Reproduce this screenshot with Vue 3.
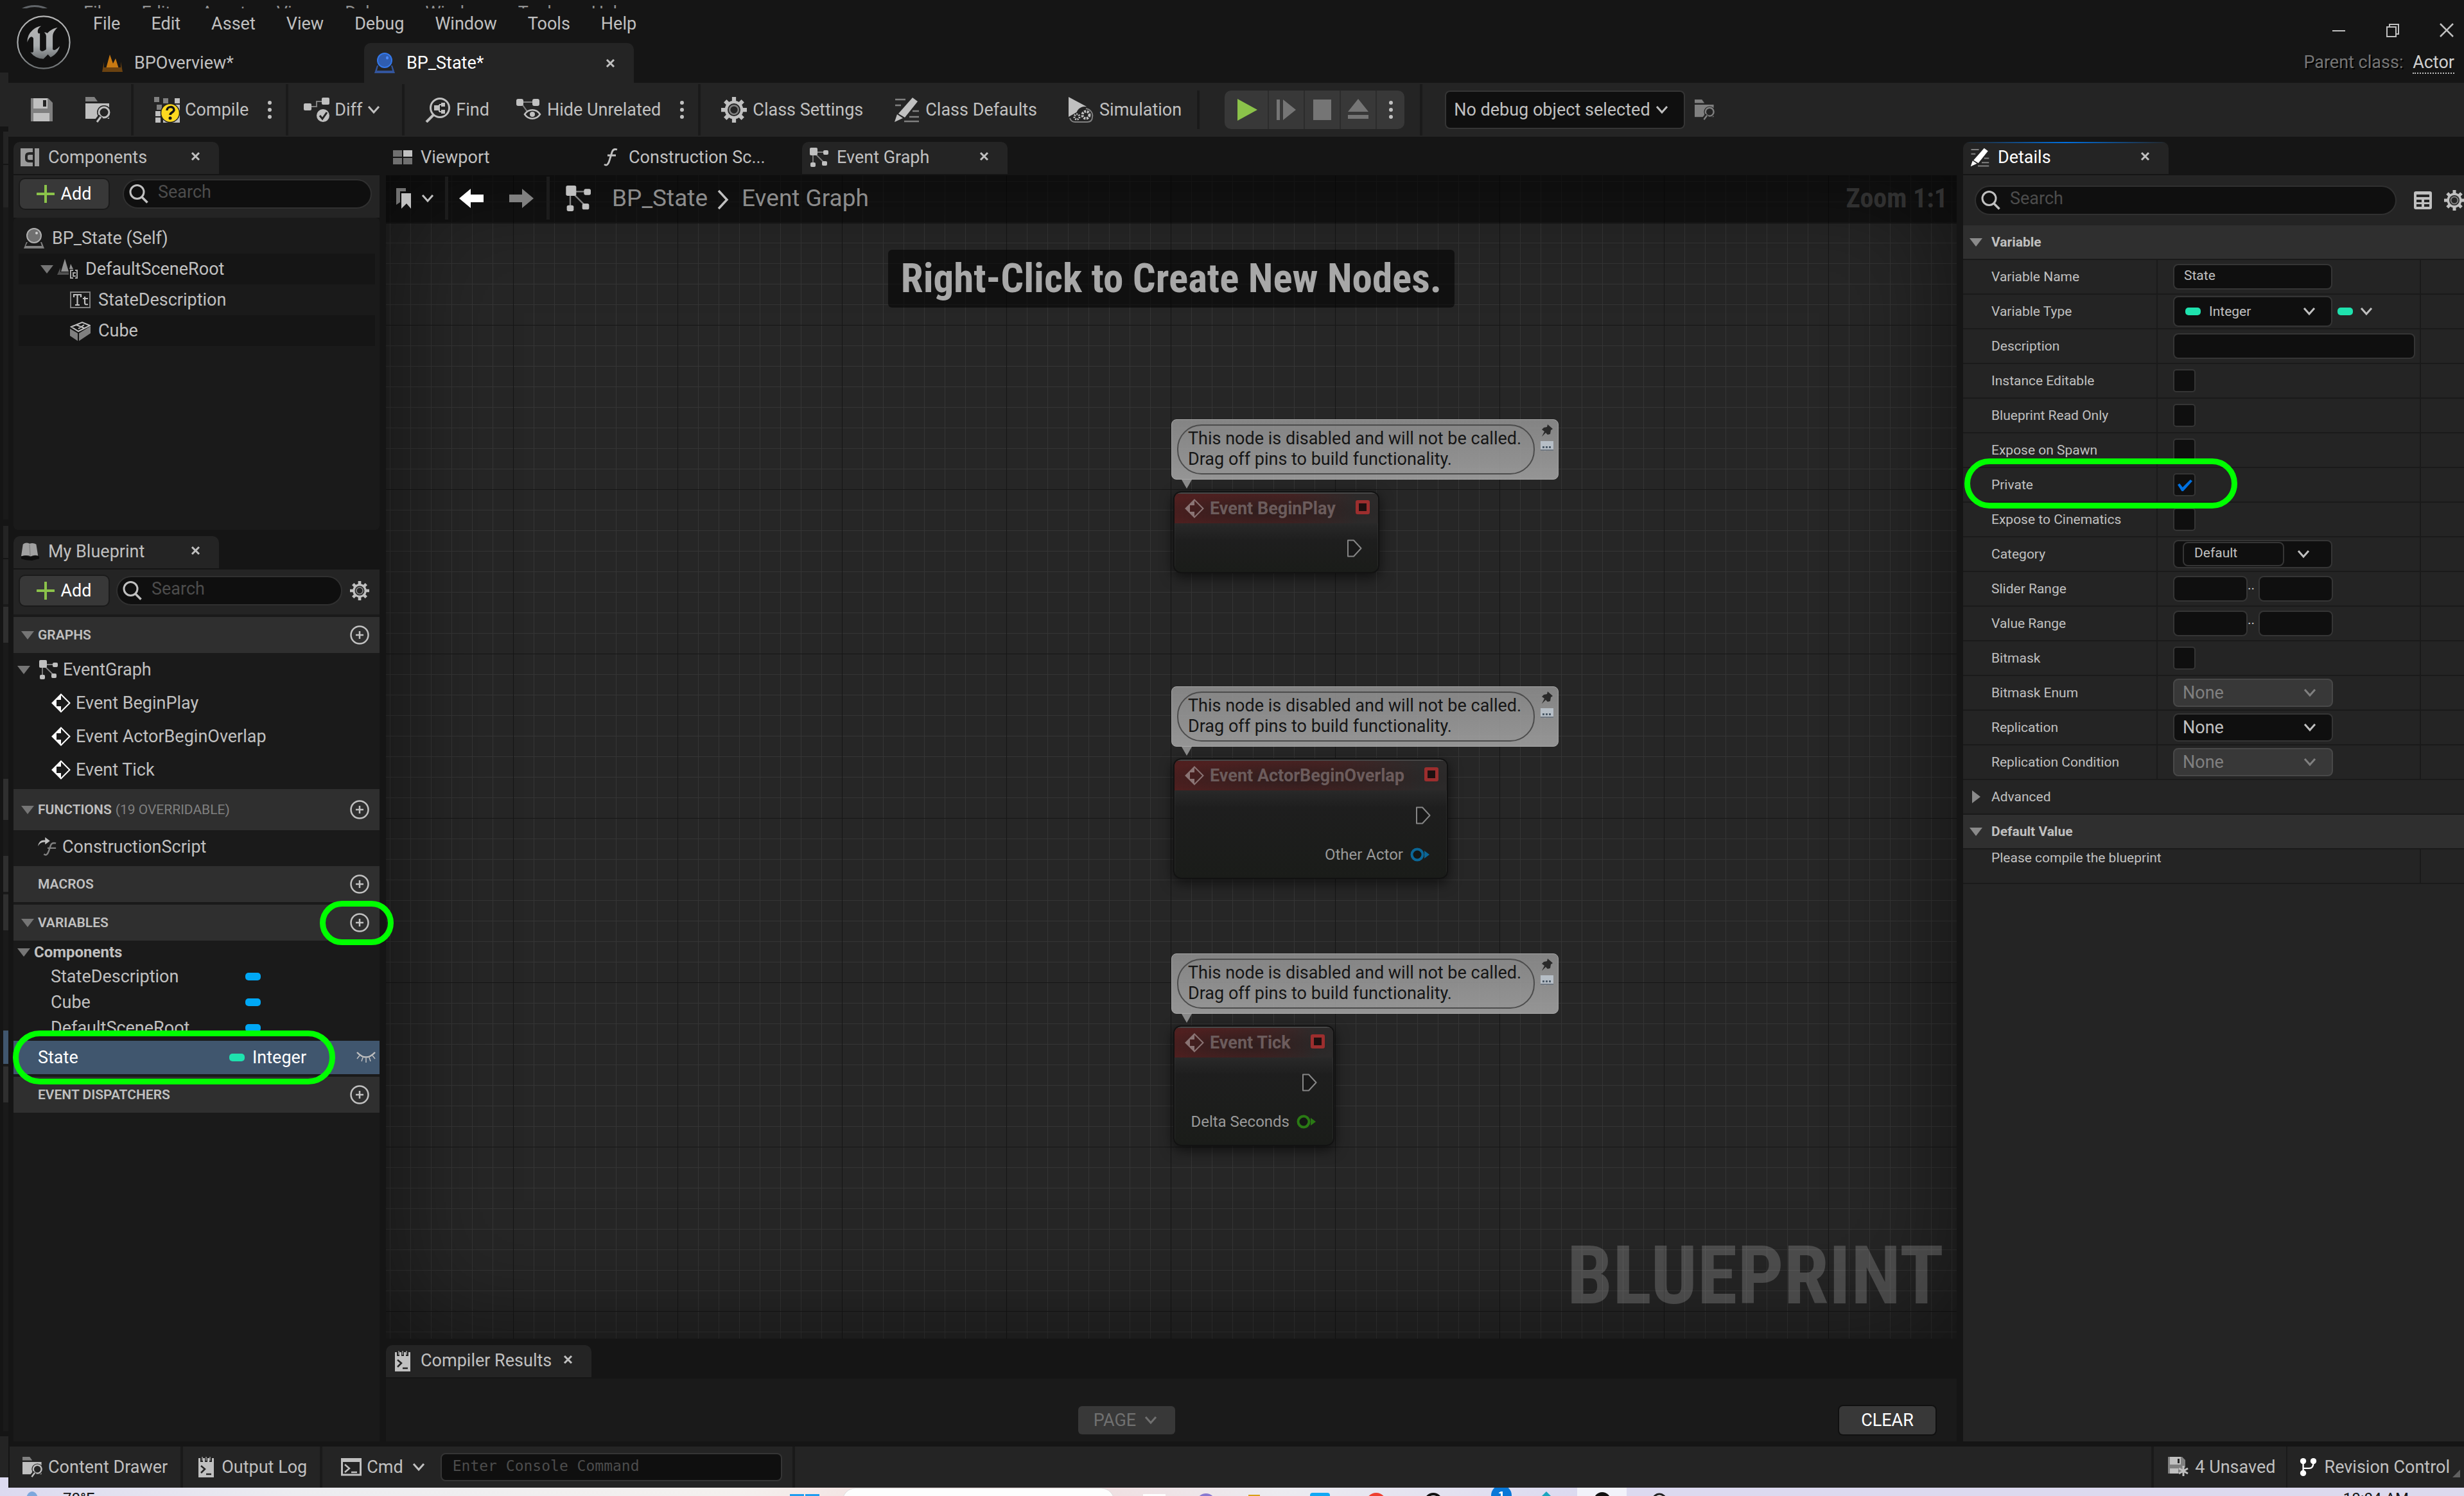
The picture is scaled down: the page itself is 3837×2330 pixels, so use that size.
<script setup>
import { ref } from 'vue'

const menu = ['File', 'Edit', 'Asset', 'View', 'Debug', 'Window', 'Tools', 'Help']

// Slices of the editor window lying behind this one, top to bottom.
const edge = [
  { h: 100, c: 'base' }, { h: 84, c: 'panel' }, { h: 8, c: 'base' },
  { h: 50, c: 'inset panel' }, { h: 2, c: 'base' }, { h: 66, c: 'inset panel' },
  { h: 486, c: 'inset well' }, { h: 10, c: 'base' }, { h: 50, c: 'inset panel' },
  { h: 2, c: 'base' }, { h: 70, c: 'inset panel' }, { h: 4, c: 'inset well' },
  { h: 56, c: 'inset head' }, { h: 212, c: 'inset well' }, { h: 64, c: 'inset head' },
  { h: 56, c: 'inset well' }, { h: 56, c: 'inset head' }, { h: 4, c: 'inset well' },
  { h: 56, c: 'inset head' }, { h: 156, c: 'inset well' }, { h: 52, c: 'inset picked' },
  { h: 4, c: 'inset well' }, { h: 56, c: 'inset head' }, { h: 512, c: 'inset well' },
  { h: 8, c: 'base' }, { h: 64, c: 'panel' }, { h: 16, c: 'desk' }
]

const events = ['Event BeginPlay', 'Event ActorBeginOverlap', 'Event Tick']
const componentVars = ['StateDescription', 'Cube', 'DefaultSceneRoot']

const nodes = [
  { title: 'Event BeginPlay', x: 1226, y: 492, w: 321, h: 128 },
  { title: 'Event ActorBeginOverlap', x: 1226, y: 908, w: 428, h: 188, pin: 'Other Actor', color: '#0b6797' },
  { title: 'Event Tick', x: 1226, y: 1324, w: 251, h: 188, pin: 'Delta Seconds', color: '#2a7a14' }
]

const rows = [
  { id: 'name', label: 'Variable Name', kind: 'text', value: 'State' },
  { id: 'type', label: 'Variable Type', kind: 'type' },
  { id: 'desc', label: 'Description', kind: 'wide', value: '' },
  { id: 'inst', label: 'Instance Editable', kind: 'check' },
  { id: 'ro', label: 'Blueprint Read Only', kind: 'check' },
  { id: 'spawn', label: 'Expose on Spawn', kind: 'check' },
  { id: 'priv', label: 'Private', kind: 'check', on: true, marked: true },
  { id: 'cine', label: 'Expose to Cinematics', kind: 'check' },
  { id: 'cat', label: 'Category', kind: 'category' },
  { id: 'slider', label: 'Slider Range', kind: 'range' },
  { id: 'value', label: 'Value Range', kind: 'range' },
  { id: 'mask', label: 'Bitmask', kind: 'check' },
  { id: 'enum', label: 'Bitmask Enum', kind: 'combo', off: true },
  { id: 'repl', label: 'Replication', kind: 'combo' },
  { id: 'cond', label: 'Replication Condition', kind: 'combo', off: true }
]

const command = ref('')
</script>

<template>
  <div class="desktop">
    <svg class="sprite" aria-hidden="true">
      <symbol id="i-x" viewBox="0 0 15 15"><path d="M2 2l11 11M13 2L2 13" stroke="currentColor" stroke-width="3" /></symbol>
      <symbol id="i-chev" viewBox="0 0 20 14"><path d="M2 2l8 9 8-9" fill="none" stroke="currentColor" stroke-width="3" /></symbol>
      <symbol id="i-tri" viewBox="0 0 20 14"><path d="M0 1h20L10 14z" fill="currentColor" /></symbol>
      <symbol id="i-dots" viewBox="0 0 6 30"><g fill="currentColor"><circle cx="3" cy="4" r="3" /><circle cx="3" cy="15" r="3" /><circle cx="3" cy="26" r="3" /></g></symbol>
      <symbol id="i-plus" viewBox="0 0 28 28"><path d="M14 1v26M1 14h26" stroke="#8bc24a" stroke-width="4" stroke-linecap="round" /></symbol>
      <symbol id="i-addc" viewBox="0 0 30 30"><circle cx="15" cy="15" r="13.5" fill="none" stroke="currentColor" stroke-width="2.5" /><path d="M15 9v12M9 15h12" stroke="currentColor" stroke-width="2.5" /></symbol>
      <symbol id="i-find" viewBox="0 0 30 30"><circle cx="12.500" cy="12" r="10.500" fill="none" stroke="currentColor" stroke-width="3" /><path d="M20 20l8.500 8.500" stroke="currentColor" stroke-width="3.500" /></symbol>
      <symbol id="i-gear" viewBox="0 0 32 32">
        <g stroke="currentColor" stroke-width="5"><path d="M16 0v32M0 16h32M5 5l22 22M27 5L5 27" /></g>
        <circle cx="16" cy="16" r="11.500" fill="currentColor" /><circle cx="16" cy="16" r="8" fill="#242424" />
        <circle cx="16" cy="16" r="5.500" fill="none" stroke="#808080" stroke-width="2" />
      </symbol>
      <symbol id="i-save" viewBox="0 0 36 36"><path d="M1 0h27l7 7v29H1z" fill="#808080" /><path d="M5 0h22v16H5zM5 23h25v13H5z" fill="#c0c0c0" /><path d="M20 3h5v10h-5z" fill="#242424" /></symbol>
      <symbol id="i-browse" viewBox="0 0 40 40">
        <path d="M0 0h14l5 7H0z" fill="#808080" /><path d="M0 10h37v24H0z" fill="currentColor" />
        <circle cx="29" cy="24" r="11" fill="#242424" /><circle cx="29" cy="24" r="8" fill="none" stroke="currentColor" stroke-width="3" /><path d="M24 30l-7 9" stroke="#242424" stroke-width="8" /><path d="M24 31l-6 8" stroke="currentColor" stroke-width="3" />
      </symbol>
      <symbol id="i-compile" viewBox="0 0 40 40">
        <g fill="#808080"><path d="M0 0h8v8H0zM14 2h8v8h-8zM4 12h8v8H4z" /></g>
        <g fill="#c0c0c0"><path d="M32 2h8v8h-8zM2 22h8v8H2zM2 32h8v8H2zM14 32h26v8H14zM32 12h8v20h-8z" /></g>
        <circle cx="25" cy="25" r="14.500" fill="#ffd91f" stroke="#242424" stroke-width="1.500" />
        <path d="M20 21c0-7 11-7 11-1 0 4-6 4-6 8" fill="none" stroke="#151515" stroke-width="3.500" /><circle cx="25" cy="33" r="2.500" fill="#151515" />
      </symbol>
      <symbol id="i-diff" viewBox="0 0 40 40">
        <path d="M8 15h12V7h12" fill="none" stroke="#808080" stroke-width="2" />
        <rect y="10" width="12" height="11" rx="2" fill="#c0c0c0" /><rect x="28" y="1" width="12" height="11" rx="2" fill="#c0c0c0" />
        <circle cx="30" cy="29" r="10" fill="#c0c0c0" /><path d="M25 29l4 5 7-10" fill="none" stroke="#242424" stroke-width="3" />
      </symbol>
      <symbol id="i-findg" viewBox="0 0 40 40">
        <circle cx="23" cy="17" r="14.500" fill="none" stroke="currentColor" stroke-width="3" /><path d="M13 28L2 39" stroke="currentColor" stroke-width="4" />
        <path d="M17 17h5M22 12v11M22 12h5M22 23h5" fill="none" stroke="currentColor" stroke-width="2" /><path d="M14 13h7v8h-7zM25 9h6v6h-6zM25 20h6v6h-6z" fill="currentColor" />
      </symbol>
      <symbol id="i-hide" viewBox="0 0 40 40">
        <path d="M6 8h26M8 10l10 14" stroke="#808080" stroke-width="2" fill="none" />
        <rect width="11" height="11" y="3" rx="3" fill="currentColor" /><rect x="25" y="3" width="11" height="11" rx="3" fill="currentColor" />
        <path d="M13 27c6-9 18-9 24 0-6 9-18 9-24 0z" fill="#242424" stroke="currentColor" stroke-width="2.500" /><circle cx="25" cy="27" r="4" fill="currentColor" />
      </symbol>
      <symbol id="i-edit" viewBox="0 0 40 40">
        <path d="M2 4h16M2 13h9M29 22h10M24 31h15M16 38h23" stroke="#808080" stroke-width="2.500" />
        <path d="M29 1l8 6-20 25-10-6z" fill="currentColor" /><path d="M5 27l9 6-13 6z" fill="currentColor" />
      </symbol>
      <symbol id="i-sim" viewBox="0 0 40 40">
        <path d="M1 0l28 15L1 31z" fill="currentColor" /><circle cx="26" cy="28" r="13" fill="#242424" />
        <path d="M28 18a13 11 0 0110 13q0 8-8 8H11q-6 0-8-6" fill="none" stroke="#808080" stroke-width="2" />
        <circle cx="14" cy="31" r="4" fill="none" stroke="currentColor" stroke-width="3" stroke-dasharray="2 1.500" /><circle cx="28" cy="28" r="5.500" fill="none" stroke="currentColor" stroke-width="4" stroke-dasharray="3 1.500" />
      </symbol>
      <symbol id="i-graph" viewBox="0 0 30 30">
        <path d="M7 7h17M6 7v19M8 8l17 17" stroke="#808080" stroke-width="1.800" fill="none" />
        <g fill="currentColor"><rect x="1" width="12" height="12" rx="2" /><rect x="22" y="4" width="8" height="7" rx="2" /><rect x="2" y="23" width="8" height="7" rx="2" /><rect x="20" y="21" width="8" height="7" rx="2" /></g>
      </symbol>
      <symbol id="i-comp" viewBox="0 0 30 30"><path d="M0 1h19v28H0zM22 1h7v28h-7z" fill="#9a9a9a" /><path d="M20 9h-6q-5 0-5 4v4q0 4 5 4h6" fill="none" stroke="#242424" stroke-width="4" /></symbol>
      <symbol id="i-view" viewBox="0 0 30 30"><path d="M0 4h14v10H0zM0 16h14v10H0zM16 16h14v10H16z" fill="#707070" /><path d="M16 4h14v10H16z" fill="#c0c0c0" /></symbol>
      <symbol id="i-func" viewBox="0 0 30 30"><path d="M5 26q5 4 8-6l4-13q2-6 8-4M10 12h13" fill="none" stroke="currentColor" stroke-width="2.800" /></symbol>
      <symbol id="i-over" viewBox="0 0 32 32">
        <path d="M10 28q5 4 8-5l3-9q2-6 9-4M16 18h14" fill="none" stroke="#808080" stroke-width="2.600" />
        <path d="M0 15Q2 4 12 5V0l8 6-8 6V8Q4 7 0 15z" fill="#c0c0c0" />
      </symbol>
      <symbol id="i-event" viewBox="0 0 30 30"><path d="M15 1.500L28.500 15 15 28.500 1.500 15z" fill="none" stroke="currentColor" stroke-width="2" /><path d="M15 1v9H8v10h7v9L1 15z" fill="currentColor" /></symbol>
      <symbol id="i-actor" viewBox="0 0 32 32">
        <path d="M4 22h24l4 10H0z" fill="#808080" /><path d="M6 22h20l2 6H3z" fill="#1a1a1a" /><circle cx="16" cy="12" r="11" fill="#707070" stroke="#b0b0b0" stroke-width="2" /><circle cx="20" cy="8" r="2" fill="#d0d0d0" />
      </symbol>
      <symbol id="i-actorb" viewBox="0 0 32 32">
        <path d="M4 20h24l4 12H0z" fill="#33559c" /><path d="M6 20h20l2 8H4z" fill="#242424" /><circle cx="16" cy="12" r="11" fill="#2f5db0" stroke="#3478ea" stroke-width="2" /><ellipse cx="20" cy="8" rx="2" ry="2.500" fill="#4c8cff" />
      </symbol>
      <symbol id="i-level" viewBox="0 0 32 32"><path d="M12 3l5 14 4-8 5 16H6z" fill="#c97a12" /><path d="M0 30L3 14v9h26V14l3 16z" fill="#6b4210" /></symbol>
      <symbol id="i-scene" viewBox="0 0 32 32"><path d="M12 0l6 20H6zM21 8l4 8h-6z" fill="#909090" /><path d="M0 25l5-11v7h13v4z" fill="#505050" /><path d="M20 17h5v2h-3v10h3v2h-5zM28 17h4v14h-4v-2h2V19h-2zM24 21h5v2h-3v3h3v2h-5z" fill="#a8a8a8" /></symbol>
      <symbol id="i-text" viewBox="0 0 32 32"><rect x="1" y="4" width="30" height="24" fill="none" stroke="#808080" stroke-width="2" /><path d="M5 8h13M6 8v4M17 8v4M11.500 8v15M8 24h7M23 11v10q0 3 5 2M20 14h8" fill="none" stroke="#c0c0c0" stroke-width="2.200" /></symbol>
      <symbol id="i-cube" viewBox="0 0 32 32"><path d="M0 13l12 7v12L0 24zM14 20l18-11v11L14 32z" fill="#808080" /><path d="M2 10l17-7 12 5-18 9zM10 7l12 5M13 13l9-6" fill="none" stroke="#c0c0c0" stroke-width="2" /></symbol>
      <symbol id="i-book" viewBox="0 0 32 30"><path d="M4 3q5-4 11-1 6-2 11 1l3 19q-6-2-12 1-7-3-16 0z" fill="#a0a0a0" /><path d="M1 23q9-2 15 1 7-3 15-1v4l-12 3-10-1-8-2z" fill="#0c0c0c" /><path d="M15 3l1 19" stroke="#808080" stroke-width="1.500" /></symbol>
      <symbol id="i-mark" viewBox="0 0 24 32"><path d="M0 0h15v5H6v17l-6 4z" fill="#707070" /><path d="M8 8h15v24l-7-8-8 8z" fill="#c0c0c0" /></symbol>
      <symbol id="i-back" viewBox="0 0 38 30"><path d="M0 15L18 0v9h20v12H18v9z" fill="currentColor" /></symbol>
      <symbol id="i-fwd" viewBox="0 0 38 30"><path d="M38 15L20 0v9H0v12h20v9z" fill="currentColor" /></symbol>
      <symbol id="i-log" viewBox="0 0 24 32"><path d="M0 2h3v6h4V2h3v6h4V2h3v6h4V2h3v30H0z" fill="currentColor" /><path d="M5 0h2v6H5zM11 0h2v6h-2zM17 0h2v6h-2z" fill="#808080" /><path d="M4 14l6 5-6 6M12 27h8" fill="none" stroke="#242424" stroke-width="2.500" /></symbol>
      <symbol id="i-cmd" viewBox="0 0 32 28"><path d="M1.500 2h29v24h-29z" fill="none" stroke="currentColor" stroke-width="3" /><path d="M0 0h32v6H0z" fill="currentColor" /><path d="M6 10l7 6-7 6M16 22h9" fill="none" stroke="currentColor" stroke-width="2.500" /></symbol>
      <symbol id="i-grid" viewBox="0 0 28 28"><rect width="28" height="28" rx="3" fill="#c0c0c0" /><path d="M4 5h20v4H4zM4 13h8v4H4zM16 13h8v4h-8zM4 20h8v4H4zM16 20h8v4h-8z" fill="#242424" /></symbol>
      <symbol id="i-eye" viewBox="0 0 30 18"><path d="M1 1q14 15 28 0" fill="none" stroke="#c0c0c0" stroke-width="2.500" /><path d="M5 6l-4 5M10 9l-2 6M15 10v7M20 9l2 6M25 6l4 5" stroke="#c0c0c0" stroke-width="1.500" /></symbol>
      <symbol id="i-unsaved" viewBox="0 0 34 32"><path d="M0 0h22l5 5v11l-10 10H0z" fill="#808080" /><path d="M3 0h17v12H3zM3 18h13v8H3z" fill="#c0c0c0" /><path d="M15 3h3v7h-3z" fill="#242424" /><path d="M24 14v16M17 18l14 8M31 18l-14 8" stroke="#c0c0c0" stroke-width="3" /></symbol>
      <symbol id="i-rev" viewBox="0 0 30 32"><path d="M6 6v20M6 18h10q7 0 7-10" fill="none" stroke="#fff" stroke-width="2.500" /><circle cx="6" cy="6" r="5" fill="#fff" /><circle cx="23" cy="6" r="5" fill="#fff" /><circle cx="6" cy="26" r="5" fill="#fff" /></symbol>
      <symbol id="i-pin" viewBox="0 0 20 20"><path d="M11 0l8 7-3 2-1 6-4 1-3-3-6 6 4-8-4-3 3-3 5-1z" fill="#2a2a2a" /></symbol>
      <symbol id="i-note" viewBox="0 0 20 18"><path d="M0 1h20v13H9l-2 3-2-3H0z" fill="#b6bec6" /><path d="M0 14h20v2H0z" fill="#6f7780" /><path d="M3 9h3v3H3zM8 9h3v3H8zM13 9h3v3h-3z" fill="#4c5a68" /></symbol>
      <symbol id="i-exec" viewBox="0 0 24 28"><path d="M2 1.500h9L22.500 14 11 26.500H2z" fill="#181818" stroke="#868686" stroke-width="2" stroke-linejoin="round" /></symbol>
      <symbol id="i-pinc" viewBox="0 0 30 22"><circle cx="11" cy="11" r="8.500" fill="#141614" stroke="currentColor" stroke-width="4" /><path d="M22 5l8 6-8 6z" fill="currentColor" /></symbol>
    </svg>

    <div class="ghost-menu" aria-hidden="true">
      <span class="ghost-arc"></span>
      <span v-for="m in menu" :key="m">{{ m }}</span>
    </div>

    <div class="stack">
      <div class="edge" aria-hidden="true">
        <i v-for="(s, n) in edge" :key="n" :class="s.c" :style="{ height: s.h + 'px' }"></i>
      </div>

      <div class="window">
        <header class="title">
          <svg class="logo" viewBox="0 0 24 24"><defs><linearGradient id="steel" x1="0" y1="0" x2="0" y2="1"><stop offset="0" stop-color="#b4b4b4" /><stop offset=".6" stop-color="#a8acae" /><stop offset="1" stop-color="#6c7072" /></linearGradient></defs>
            <circle cx="12" cy="12" r="11.600" fill="#111" stroke="url(#steel)" stroke-width=".6" />
            <path fill="url(#steel)" d="M19.130 13.729c-.206.997-1.126 3.557-4.060 4.942l-1.179-1.325-1.988 2a7.338 7.338 0 01-5.804-2.978 2.859 2.859 0 00.650.123c.326.006.678-.114.678-.660v-5.394a.890.890 0 00-1.116-.890c-.920.212-1.656 2.509-1.656 2.509a7.304 7.304 0 012.528-5.597 7.408 7.408 0 013.730-1.721c-1.006.573-1.570 1.507-1.570 2.290 0 1.262.760 1.109.984.923v7.280a1.157 1.157 0 00.148.256 1.075 1.075 0 00.880.445c.760 0 1.747-.868 1.747-.868V9.172c0-.600-.452-1.324-.905-1.572 0 0 .838-.149 1.484.346a5.537 5.537 0 01.387-.425c1.508-1.480 2.929-1.902 4.112-2.112 0 0-2.151 1.690-2.151 3.960 0 1.687.043 5.801.043 5.801.799.771 1.986-.342 3.059-1.441z" />
          </svg>
          <div class="title-main">
            <nav class="menu"><button v-for="m in menu" :key="m">{{ m }}</button></nav>
            <div class="docs">
              <button class="doc"><svg class="s32"><use href="#i-level" /></svg><span>BPOverview*</span></button>
              <div class="doc active"><svg class="s32"><use href="#i-actorb" /></svg><span>BP_State*</span><button class="close" aria-label="Close BP_State"><svg><use href="#i-x" /></svg></button></div>
            </div>
          </div>
          <div class="title-side">
            <div class="winbtns">
              <button aria-label="Minimize"><svg viewBox="0 0 24 24"><path d="M2 13h20" stroke="#c0c0c0" stroke-width="2" /></svg></button>
              <button aria-label="Restore"><svg viewBox="0 0 24 24"><path d="M3 7h14v15H3zM7 6V3h14v15h-4" fill="none" stroke="#c0c0c0" stroke-width="2" /></svg></button>
              <button aria-label="Close"><svg viewBox="0 0 24 24"><path d="M2 2l20 20M22 2L2 22" stroke="#c0c0c0" stroke-width="2.500" /></svg></button>
            </div>
            <p class="parent">Parent class: <a href="#actor">Actor</a></p>
          </div>
        </header>

        <div class="toolbar">
          <div class="grp first">
            <button class="tool" aria-label="Save"><svg class="s36"><use href="#i-save" /></svg></button>
            <button class="tool" aria-label="Browse"><svg class="s40"><use href="#i-browse" /></svg></button>
          </div>
          <div class="grp pad">
            <button class="tool"><svg class="s40"><use href="#i-compile" /></svg>Compile</button>
            <button class="more" aria-label="Compile options"><svg><use href="#i-dots" /></svg></button>
          </div>
          <div class="grp padr">
            <button class="tool"><svg class="s40"><use href="#i-diff" /></svg>Diff<svg class="chev"><use href="#i-chev" /></svg></button>
          </div>
          <div class="grp pad">
            <button class="tool"><svg class="s40"><use href="#i-findg" /></svg>Find</button>
            <button class="tool tight"><svg class="s40"><use href="#i-hide" /></svg>Hide Unrelated</button>
            <button class="more" aria-label="Hide options"><svg><use href="#i-dots" /></svg></button>
          </div>
          <div class="grp pad short">
            <button class="tool"><svg class="s40"><use href="#i-gear" /></svg>Class Settings</button>
            <button class="tool"><svg class="s40"><use href="#i-edit" /></svg>Class Defaults</button>
            <button class="tool"><svg class="s40"><use href="#i-sim" /></svg>Simulation</button>
          </div>
          <div class="grp play-wrap">
            <div class="play">
              <button aria-label="Play" class="go"><svg viewBox="0 0 32 34"><path d="M0 0l31 17L0 34z" fill="#8bc24a" /></svg></button>
              <button aria-label="Step"><svg viewBox="0 0 32 34"><path d="M1 1h5v32H1zM11 1l20 16-20 16z" fill="#757575" /></svg></button>
              <button aria-label="Stop"><svg viewBox="0 0 32 34"><path d="M2 1h28v32H2z" fill="#757575" /></svg></button>
              <button aria-label="Eject"><svg viewBox="0 0 32 34"><path d="M16 0l16 20H0zM0 25h32v6H0z" fill="#757575" /></svg></button>
              <button aria-label="Play options" class="opts"><svg class="dots"><use href="#i-dots" /></svg></button>
            </div>
          </div>
          <div class="debug">
            <div class="combo big"><select aria-label="Debug object"><option>No debug object selected</option></select><svg class="chev"><use href="#i-chev" /></svg></div>
            <svg class="s32 dim"><use href="#i-browse" /></svg>
          </div>
        </div>

        <main class="cols">
          <aside class="left">
            <div class="tabs"><div class="tab on"><svg class="s30"><use href="#i-comp" /></svg><span>Components</span><button class="close" aria-label="Close Components"><svg><use href="#i-x" /></svg></button></div></div>
            <div class="bar">
              <button class="add"><svg class="s28"><use href="#i-plus" /></svg>Add</button>
              <label class="search"><svg class="s30"><use href="#i-find" /></svg><input type="text" placeholder="Search" aria-label="Search components"></label>
            </div>
            <ul class="tree">
              <li><svg class="s32"><use href="#i-actor" /></svg>BP_State (Self)</li>
              <li class="alt l1"><svg class="tri"><use href="#i-tri" /></svg><svg class="s32"><use href="#i-scene" /></svg>DefaultSceneRoot</li>
              <li class="l2"><svg class="s32"><use href="#i-text" /></svg>StateDescription</li>
              <li class="alt l2"><svg class="s32"><use href="#i-cube" /></svg>Cube</li>
            </ul>

            <div class="tabs second"><div class="tab on"><svg class="s30"><use href="#i-book" /></svg><span>My Blueprint</span><button class="close" aria-label="Close My Blueprint"><svg><use href="#i-x" /></svg></button></div></div>
            <div class="bar b2">
              <button class="add"><svg class="s28"><use href="#i-plus" /></svg>Add</button>
              <label class="search"><svg class="s30"><use href="#i-find" /></svg><input type="text" placeholder="Search" aria-label="Search blueprint"></label>
              <button class="iconbtn" aria-label="Settings"><svg class="s30"><use href="#i-gear" /></svg></button>
            </div>
            <div class="list">
              <div class="sect"><svg class="tri"><use href="#i-tri" /></svg><b>GRAPHS</b><button class="iconbtn" aria-label="Add graph"><svg class="s30"><use href="#i-addc" /></svg></button></div>
              <div class="item root"><svg class="tri"><use href="#i-tri" /></svg><svg class="s30"><use href="#i-graph" /></svg>EventGraph</div>
              <div v-for="e in events" :key="e" class="item ev"><svg class="s30"><use href="#i-event" /></svg>{{ e }}</div>
              <div class="sect tall"><svg class="tri"><use href="#i-tri" /></svg><b>FUNCTIONS</b><span class="sub">(19 OVERRIDABLE)</span><button class="iconbtn" aria-label="Add function"><svg class="s30"><use href="#i-addc" /></svg></button></div>
              <div class="item fn"><svg class="s30"><use href="#i-over" /></svg>ConstructionScript</div>
              <div class="sect"><i class="tri"></i><b>MACROS</b><button class="iconbtn" aria-label="Add macro"><svg class="s30"><use href="#i-addc" /></svg></button></div>
              <div class="sect"><svg class="tri"><use href="#i-tri" /></svg><b>VARIABLES</b><button class="iconbtn" aria-label="Add variable"><svg class="s30"><use href="#i-addc" /></svg></button><i class="ring ring-add"></i></div>
              <div class="group"><svg class="tri"><use href="#i-tri" /></svg><b>Components</b></div>
              <div v-for="v in componentVars" :key="v" class="var"><span>{{ v }}</span><i class="pill blue"></i></div>
              <div class="item picked"><span>State</span><i class="pill"></i><em>Integer</em><svg class="eye"><use href="#i-eye" /></svg><i class="ring ring-state"></i></div>
              <div class="sect"><i class="tri"></i><b>EVENT DISPATCHERS</b><button class="iconbtn" aria-label="Add dispatcher"><svg class="s30"><use href="#i-addc" /></svg></button></div>
            </div>
          </aside>

          <section class="mid">
            <div class="tabs">
              <button class="tab"><svg class="s30"><use href="#i-view" /></svg><span>Viewport</span></button>
              <button class="tab"><svg class="s30"><use href="#i-func" /></svg><span>Construction Sc...</span></button>
              <div class="tab on"><svg class="s30"><use href="#i-graph" /></svg><span>Event Graph</span><button class="close" aria-label="Close Event Graph"><svg><use href="#i-x" /></svg></button></div>
            </div>
            <div class="canvas">
              <div class="crumbs">
                <button class="marks" aria-label="Bookmarks"><svg class="mk"><use href="#i-mark" /></svg><svg class="chev"><use href="#i-chev" /></svg></button>
                <i class="rule"></i>
                <button class="nav" aria-label="Back"><svg><use href="#i-back" /></svg></button>
                <button class="nav fwd" aria-label="Forward"><svg><use href="#i-fwd" /></svg></button>
                <i class="rule"></i>
                <svg class="gr"><use href="#i-graph" /></svg>
                <span>BP_State</span><svg class="sep" viewBox="0 0 18 32"><path d="M2 2l13 14L2 30" fill="none" stroke="#c0c0c0" stroke-width="3.500" /></svg><span>Event Graph</span>
                <strong>Zoom 1:1</strong>
              </div>
              <p class="hint">Right-Click to Create New Nodes.</p>
              <article v-for="n in nodes" :key="n.title" class="place" :style="{ left: n.x + 'px', top: n.y + 'px' }">
                <div class="bubble">
                  <p>This node is disabled and will not be called.<br>Drag off pins to build functionality.</p>
                  <div class="bub-ic"><svg class="s20"><use href="#i-pin" /></svg><svg class="s20"><use href="#i-note" /></svg></div>
                </div>
                <div class="node" :style="{ width: n.w + 'px', height: n.h + 'px' }">
                  <h3><svg class="s30"><use href="#i-event" /></svg>{{ n.title }}<i></i></h3>
                  <div class="exec"><svg><use href="#i-exec" /></svg></div>
                  <div v-if="n.pin" class="out">{{ n.pin }}<svg :style="{ color: n.color }"><use href="#i-pinc" /></svg></div>
                </div>
              </article>
              <div class="brand">BLUEPRINT</div>
            </div>
            <div class="tabs second"><div class="tab on"><svg class="lg"><use href="#i-log" /></svg><span>Compiler Results</span><button class="close" aria-label="Close Compiler Results"><svg><use href="#i-x" /></svg></button></div></div>
            <div class="results">
              <div class="page-wrap"><button class="btn" disabled>PAGE<svg class="chev"><use href="#i-chev" /></svg></button></div>
              <button class="btn clear">CLEAR</button>
            </div>
          </section>

          <aside class="right">
            <div class="tabs"><div class="tab on focus"><svg class="s30"><use href="#i-edit" /></svg><span>Details</span><button class="close" aria-label="Close Details"><svg><use href="#i-x" /></svg></button></div></div>
            <div class="details">
              <div class="dsearch">
                <label class="search"><svg class="s30"><use href="#i-find" /></svg><input type="text" placeholder="Search" aria-label="Search details"></label>
                <button class="iconbtn" aria-label="Property matrix"><svg class="s28"><use href="#i-grid" /></svg></button>
                <button class="iconbtn" aria-label="View options"><svg class="s32"><use href="#i-gear" /></svg></button>
              </div>
              <div class="dhead"><svg class="tri"><use href="#i-tri" /></svg><b>Variable</b></div>
              <div v-for="r in rows" :key="r.id" class="prop">
                <label :for="r.id">{{ r.label }}</label>
                <div class="val">
                  <input v-if="r.kind === 'text' || r.kind === 'wide'" :id="r.id" type="text" class="field" :class="r.kind" :value="r.value">
                  <template v-else-if="r.kind === 'type'">
                    <div class="combo type"><i class="pill"></i><select :id="r.id"><option>Integer</option></select><svg class="chev"><use href="#i-chev" /></svg></div>
                    <button class="container" aria-label="Container type"><i class="pill"></i><svg class="chev"><use href="#i-chev" /></svg></button>
                  </template>
                  <input v-else-if="r.kind === 'check'" :id="r.id" type="checkbox" class="check" :checked="r.on">
                  <div v-else-if="r.kind === 'category'" class="combo cat"><input :id="r.id" type="text" value="Default"><button aria-label="Pick category"><svg class="chev"><use href="#i-chev" /></svg></button></div>
                  <template v-else-if="r.kind === 'range'"><input :id="r.id" type="text" class="field half"><span class="to">..</span><input type="text" class="field half" :aria-label="r.label + ' maximum'"></template>
                  <div v-else class="combo none" :class="{ off: r.off }"><select :id="r.id" :disabled="r.off"><option>None</option></select><svg class="chev"><use href="#i-chev" /></svg></div>
                </div>
                <div class="tail"></div>
                <i v-if="r.marked" class="ring ring-priv"></i>
              </div>
              <div class="dhead adv"><svg class="tri shut"><use href="#i-tri" /></svg>Advanced</div>
              <div class="dhead"><svg class="tri"><use href="#i-tri" /></svg><b>Default Value</b></div>
              <div class="note"><p>Please compile the blueprint</p><div class="tail"></div></div>
            </div>
          </aside>
        </main>

        <footer class="status">
          <button class="st"><svg class="s32"><use href="#i-browse" /></svg>Content Drawer</button>
          <button class="st log"><svg class="lg"><use href="#i-log" /></svg>Output Log</button>
          <div class="st cmdbox">
            <button class="cmd"><svg class="s32"><use href="#i-cmd" /></svg>Cmd<svg class="chev"><use href="#i-chev" /></svg></button>
            <input v-model="command" type="text" placeholder="Enter Console Command" aria-label="Console command">
          </div>
          <span class="fill"></span>
          <button class="st uns"><svg class="s34"><use href="#i-unsaved" /></svg>4 Unsaved</button>
          <button class="rev"><svg class="s30"><use href="#i-rev" /></svg>Revision Control</button>
          <i class="grip"></i>
        </footer>
      </div>
    </div>

    <footer class="taskbar">
      <svg class="wx" viewBox="0 0 30 20"><ellipse cx="10" cy="12" rx="9" ry="12" fill="#7da7dc" /><circle cx="22" cy="18" r="9" fill="#f0a830" /></svg>
      <span class="temp">70°F</span>
      <span class="push"></span>
      <svg class="apps" viewBox="0 0 1370 13">
        <path d="M0 10h22v3H0zM24 10h22v3H24z" fill="#1f9df0" />
        <rect x="82" y="1" width="423" height="40" rx="20" fill="#fdfdfd" stroke="#ddd" />
        <path d="M550 10h35v3h-35z" fill="#fff" /><circle cx="648" cy="24" r="15" fill="#8878d0" /><path d="M714 11h18v2h-18z" fill="#d9a018" />
        <rect x="810" y="8" width="31" height="20" rx="4" fill="#12a8f4" /><circle cx="913" cy="24" r="16" fill="#ee4030" />
        <circle cx="1002" cy="22" r="12" fill="none" stroke="#111" stroke-width="4" />
        <path d="M1226 0h77v13h-77z" fill="#f2f2fa" /><circle cx="1108" cy="12" r="16" fill="#0a78d8" /><path d="M1107 6h3v7h-3zM1104 8l3-2v3h-3z" fill="#fff" />
        <path d="M1178 6l12 12h-24z" fill="#1aa6c0" /><circle cx="1265" cy="20" r="13" fill="#111" /><circle cx="1354" cy="20" r="10" fill="#fff" stroke="#222" stroke-width="3" />
      </svg>
      <span class="push wide"></span>
      <time>10:04 AM</time>
    </footer>
  </div>
</template>

<style>
body { background: #151515; }
</style>

<style scoped>
.desktop, .desktop * { box-sizing: border-box; }
.desktop { display: flex; flex-direction: column; height: 100vh; overflow: hidden; background: #151515; color: #c0c0c0; font: 27px/32px Roboto, "Noto Sans", sans-serif; white-space: nowrap; }
.sprite { position: absolute; width: 0; height: 0; }
button, input, select { font: inherit; color: inherit; background: none; border: 0; padding: 0; margin: 0; }
button { display: flex; align-items: center; justify-content: center; flex: none; }
input { min-width: 0; outline: 0; }
select { appearance: none; flex: 1; min-width: 0; }
select:disabled { opacity: 1; color: #808080; }
p, h3, ul { margin: 0; padding: 0; }
i, em { font-style: normal; }
svg { flex: none; display: block; }
.s20 { width: 20px; height: 20px; }
.s28 { width: 28px; height: 28px; }
.s30 { width: 30px; height: 30px; }
.s32 { width: 32px; height: 32px; }
.s34 { width: 34px; height: 32px; }
.s36 { width: 36px; height: 36px; }
.s40 { width: 40px; height: 40px; }
.lg { width: 24px; height: 32px; }
.chev { width: 20px; height: 14px; }
.tri { width: 20px; height: 14px; flex: none; color: #757575; }

.ghost-menu { position: relative; display: flex; gap: 48px; height: 13px; padding: 4px 0 0 130px; overflow: hidden; flex: none; color: #909090; }
.ghost-arc { position: absolute; left: 12px; top: 8px; width: 84px; height: 84px; border: 3px solid #606468; border-radius: 50%; }
.stack { display: flex; flex: 1; min-height: 0; }
.edge { display: flex; flex-direction: column; width: 13px; flex: none; overflow: hidden; }
.edge i { flex: none; }
.edge .inset { margin-left: 5px; }
.base { background: #151515; }
.panel { background: #242424; }
.well { background: #1a1a1a; }
.head { background: #2f2f2f; }
.picked { background: #40566e; }
.desk { background: #dcdaf0; }
.window { display: flex; flex-direction: column; flex: 1; min-width: 0; }

.title { display: flex; height: 116px; flex: none; }
.logo { width: 84px; height: 84px; margin: 11px 33px 0 13px; }
.title-main { flex: 1; display: flex; flex-direction: column; }
.menu { display: flex; height: 54px; padding: 8px 0 14px 2px; gap: 48px; }
.docs { display: flex; gap: 4px; }
.doc { display: flex; align-items: center; justify-content: flex-start; gap: 18px; width: 420px; height: 62px; padding: 0 29px 0 16px; }
.doc.active { background: #242424; border-radius: 10px 10px 0 0; color: #fff; }
.close { margin-left: auto; color: #c0c0c0; }
.close svg { width: 15px; height: 15px; }
.title-side { display: flex; flex-direction: column; padding-right: 15px; }
.winbtns { display: flex; justify-content: flex-end; gap: 60px; padding-top: 22px; }
.winbtns svg { width: 24px; height: 24px; }
.parent { margin-top: 22px; color: #757575; text-shadow: 2px 2px 0 #000; }
.parent a { color: #d0d0d0; text-decoration: none; border-bottom: 2px dotted #c0c0c0; margin-left: 8px; text-shadow: none; }

.toolbar { display: flex; height: 84px; flex: none; background: #242424; }
.grp { display: flex; align-items: center; border-right: 4px solid #1a1a1a; margin: 2px 0; }
.first { padding: 0 7px 0 10px; gap: 2px; }
.tool { height: 80px; padding: 0 24px; gap: 8px; }
.pad { padding-left: 8px; }
.padr { padding-right: 10px; }
.tight { padding-left: 18px; }
.more { width: 34px; padding-left: 6px; justify-content: flex-start; }
.more svg, .play .dots { width: 6px; height: 30px; }
.short { margin: 12px 0; }
.short .tool { gap: 9px; }
.play-wrap { padding: 0 24px 0 39px; }
.play { display: flex; width: 280px; height: 60px; background: #383838; border-radius: 10px; overflow: hidden; }
.play button { width: 56px; border-left: 2px solid #2c2c2c; height: 60px; }
.play .go { width: 67px; border: 0; padding-left: 4px; }
.play .opts { flex: 1; }
.play svg { width: 32px; height: 34px; }
.debug { display: flex; align-items: center; gap: 15px; padding-left: 35px; }
.dim { color: #808080; }
.combo { display: flex; align-items: center; position: relative; background: #0f0f0f; border: 2px solid #353535; border-radius: 8px; }
.combo.big { width: 374px; height: 60px; padding: 0 24px 0 12px; }

.cols { display: flex; flex: 1; min-height: 0; gap: 10px; padding: 8px 0 8px 8px; }
.left { width: 570px; flex: none; display: flex; flex-direction: column; }
.mid { flex: 1; min-width: 0; display: flex; flex-direction: column; }
.right { width: 780px; flex: none; display: flex; flex-direction: column; }
.tabs { display: flex; gap: 4px; height: 52px; padding-bottom: 2px; flex: none; }
.tabs.second { margin-top: 10px; }
.tab { display: flex; align-items: center; justify-content: flex-start; gap: 13px; width: 320px; height: 50px; padding: 0 29px 0 11px; border-radius: 10px 10px 0 0; }
.tab > span { flex: 1; text-align: left; padding-bottom: 3px; }
.tab .close { padding-bottom: 5px; }
.tab .s30 { margin-bottom: 2px; }
.tab .lg { margin: 0 3px; }
.on { background: #242424; }
.focus { color: #fff; background: linear-gradient(90deg, #242424, #0070e0 50%, #242424) 0 0 / 100% 2px no-repeat, #242424; }

.bar { display: flex; align-items: center; height: 66px; padding: 0 12px 8px 10px; gap: 22px; background: #242424; flex: none; }
.b2 { height: 70px; padding: 0 16px 4px 10px; gap: 12px; }
.add { width: 138px; height: 46px; gap: 9px; background: #383838; border-radius: 8px; box-shadow: 0 0 0 2px #1a1a1a; color: #fff; }
.search { display: flex; align-items: center; flex: 1; min-width: 0; height: 46px; padding: 0 8px; gap: 15px; background: #0f0f0f; border: 2px solid #303030; border-radius: 23px; }
.search input { flex: 1; width: 100%; height: 36px; padding-bottom: 6px; }
input::placeholder { color: #4c4c4c; opacity: 1; }
.tree { list-style: none; height: 486px; flex: none; padding: 8px 7px 0 8px; background: #1a1a1a; border-radius: 6px; }
.tree li { display: flex; align-items: center; gap: 12px; height: 48px; padding-left: 8px; }
.tree .alt { background: #151515; }
.tree .l1 { padding-left: 34px; }
.tree .l1 .tri { margin-right: -6px; }
.tree .l2 { padding-left: 80px; }
.list { flex: 1; min-height: 0; background: #1a1a1a; }
.sect { position: relative; display: flex; align-items: center; gap: 6px; height: 56px; margin-top: 4px; padding: 0 16px 0 12px; background: #2f2f2f; font-size: 21px; }
.sect.tall { height: 64px; }
.sect b { font-weight: 600; }
.sect .iconbtn { margin-left: auto; }
.sub { color: #808080; }
.item { position: relative; display: flex; align-items: center; gap: 8px; height: 52px; }
.root { padding-left: 6px; }
.root .tri { margin-right: 5px; }
.ev { padding-left: 59px; }
.ev svg { color: #fff; }
.fn { padding-left: 38px; }
.group { display: flex; align-items: center; gap: 6px; height: 36px; padding-left: 6px; font-size: 24px; }
.var { display: flex; align-items: center; height: 40px; padding-left: 58px; }
.var span { flex: 0 0 303px; }
.pill { width: 24px; height: 12px; border-radius: 5px; background: #1fe2ae; flex: none; }
.blue { background: #00a8f6; }
.item.picked { gap: 12px; padding: 0 6px 0 38px; color: #fff; }
.picked span { flex: 0 0 286px; }
.eye { width: 30px; height: 18px; margin-left: auto; }
.ring { position: absolute; border: 9px solid #00ff00; z-index: 3; pointer-events: none; }
.ring-add { left: 477px; top: -6px; width: 115px; height: 69px; border-radius: 35px; }
.ring-state { left: -1px; top: -16px; width: 502px; height: 84px; border-radius: 42px; }
.ring-priv { left: 2px; top: -15px; width: 425px; height: 78px; border-radius: 39px; }

.canvas { position: relative; flex: 1; min-height: 0; overflow: hidden; background-color: #262626;
  background-image:
    linear-gradient(90deg, #000 1px, transparent 1px), linear-gradient(#000 1px, transparent 1px),
    linear-gradient(90deg, #161616 1px, transparent 1px), linear-gradient(#161616 1px, transparent 1px),
    linear-gradient(90deg, #353535 1px, transparent 1px), linear-gradient(#353535 1px, transparent 1px);
  background-size: 4096px 4096px, 4096px 4096px, 256px 256px, 256px 256px, 32px 32px, 32px 32px;
  background-position: 1222px 0, 0 489px, 198px 0, 0 233px, 6px 0, 0 9px; }
.canvas::before { content: ""; position: absolute; inset: 0; box-shadow: inset 0 0 180px rgba(0, 0, 0, .55); }
.crumbs { position: relative; display: flex; align-items: center; height: 75px; padding: 0 14px 4px 16px; background: rgba(0, 0, 0, .5); color: #8c8c8c; font-size: 37px; }
.marks { gap: 15px; color: #c0c0c0; }
.mk { width: 24px; height: 32px; }
.rule { width: 5px; height: 67px; margin: 0 17px; background: #1c1c1c; }
.nav { color: #fff; margin-right: 40px; }
.nav.fwd { color: #808080; margin-right: 3px; }
.nav svg { width: 38px; height: 30px; }
.gr { width: 44px; height: 40px; margin: 0 31px 0 5px; color: #c0c0c0; }
.sep { width: 18px; height: 32px; margin: 4px 20px 0 15px; }
.crumbs strong { margin-left: auto; color: #303030; font-family: "Roboto Condensed", Roboto, sans-serif; font-size: 42px; }
.hint { position: relative; width: max-content; margin: 41px auto 0; padding: 0 20px; line-height: 90px; background: rgba(0, 0, 0, .55); border-radius: 6px; color: #a8a8a8; font-family: "Roboto Condensed", Roboto, sans-serif; font-weight: 700; font-size: 63px; }
.brand { position: absolute; right: 20px; bottom: 23px; font-family: "Roboto Condensed", Roboto, sans-serif; font-weight: 700; font-size: 127px; line-height: 150px; color: rgba(255, 255, 255, .18); }
.place { position: absolute; }
.bubble { position: absolute; left: -3px; top: -112px; display: flex; width: 603px; height: 94px; padding: 7px 7px 7px 8px; gap: 9px; background: linear-gradient(rgba(148, 148, 148, .85), rgba(168, 168, 168, .85)); border: 1px solid #a8a8a8; border-radius: 8px; color: #151515; }
.bubble::after { content: ""; position: absolute; left: 15px; top: 93px; width: 16px; height: 14px; background: #8a8a8a; clip-path: polygon(0 0, 100% 0, 50% 100%); }
.bubble p { width: 559px; height: 78px; padding: 4px 15px; border: 2px solid #4c4c4c; border-radius: 38px; }
.bub-ic { display: flex; flex-direction: column; gap: 4px; }
.node { background: linear-gradient(#2c2c2c 40px, #1e1e1e 75px, #1a1c19 100%); border: 2px solid #121212; border-radius: 12px; box-shadow: 0 6px 20px rgba(0, 0, 0, .6), inset 0 3px 2px #484848; overflow: hidden; }
.node h3 { display: flex; align-items: center; height: 46px; margin-top: 2px; padding: 0 13px 0 16px; gap: 9px; font-size: 27px; color: #6c5c5c; background: radial-gradient(60% 60% at 45% 60%, rgba(35, 28, 28, .7), transparent), linear-gradient(90deg, #501f1f, #462222 55%, #2c2a2a 90%); }
.node h3 i { width: 22px; height: 22px; margin: 0 0 4px auto; border: 5px solid #9c2e2e; border-radius: 3px; background: #1e1010; }
.node h3 svg { color: #8a7474; }
.exec { display: flex; justify-content: flex-end; padding: 25px 25px 0 0; }
.exec svg { width: 24px; height: 28px; }
.out { display: flex; align-items: center; justify-content: flex-end; gap: 11px; margin-top: 31px; padding-right: 27px; font-size: 24px; color: #999; }
.out svg { width: 30px; height: 22px; }

.results { display: flex; align-items: flex-end; height: 98px; flex: none; padding: 0 33px 11px 0; background: #1a1a1a; }
.page-wrap { flex: 1; display: flex; justify-content: center; padding-left: 44px; }
.btn { height: 44px; gap: 13px; padding: 0 28px 0 24px; background: #383838; border-radius: 6px; color: #707070; }
.clear { width: 150px; padding: 0; color: #fff; box-shadow: 0 0 0 2px #101010; }

.details { flex: 1; min-height: 0; background: #242424; font-size: 21px; line-height: 26px; overflow: hidden; }
.dsearch { display: flex; align-items: center; height: 78px; padding: 0 0 0 18px; font-size: 27px; }
.dsearch .search { flex: 0 0 657px; margin-right: 27px; }
.dsearch .iconbtn + .iconbtn { margin-left: 19px; }
.dhead { display: flex; align-items: center; gap: 14px; height: 54px; padding-left: 10px; background: #2f2f2f; border-bottom: 2px solid #1a1a1a; }
.dhead .tri { color: #8a8a8a; }
.adv { background: none; }
.shut { transform: rotate(-90deg); }
.prop { position: relative; display: flex; height: 54px; border-bottom: 2px solid #1a1a1a; }
.prop > label { display: flex; align-items: center; width: 303px; padding-left: 44px; border-right: 2px solid #1a1a1a; }
.val { display: flex; align-items: center; width: 408px; padding-left: 24px; }
.tail { flex: 1; border-left: 2px solid #1a1a1a; }
.field { height: 40px; padding: 0 15px 4px; background: #0f0f0f; border: 2px solid #353535; border-radius: 8px; }
.field.text { width: 248px; }
.field.wide { width: 377px; }
.field.half { width: 116px; }
.to { width: 17px; text-align: left; margin-top: -12px; }
.combo.type { width: 248px; height: 48px; padding: 0 24px 0 17px; gap: 13px; }
.combo.none { width: 249px; height: 44px; padding: 0 24px 0 13px; font-size: 27px; }
.combo.off { background: #383838; border-color: #484848; color: #808080; }
.container { gap: 11px; margin-left: 8px; }
.cat { width: 248px; height: 44px; padding-left: 13px; }
.cat input { width: 158px; height: 38px; padding: 0 16px 4px; border: 2px solid #353535; border-radius: 8px; }
.cat button { width: 60px; }
.check { appearance: none; width: 35px; height: 36px; background: #0f0f0f; border: 2px solid #353535; border-radius: 5px; }
.check:checked::before { content: ""; display: block; width: 23px; height: 18px; margin: 8px 0 0 5px; background: #0070e0; clip-path: polygon(0 45%, 14% 34%, 34% 66%, 86% 0, 100% 12%, 38% 100%, 28% 100%); }
.note { display: flex; height: 54px; border-bottom: 2px solid #1a1a1a; }
.note p { width: 711px; padding-left: 44px; }

.status { position: relative; display: flex; align-items: stretch; height: 64px; flex: none; background: #242424; margin-left: 2px; }
.st { gap: 8px; padding: 0 20px; border-right: 4px solid #1a1a1a; }
.log { gap: 12px; padding: 0 20px 0 24px; }
.cmdbox { display: flex; align-items: center; gap: 24px; padding: 0 16px 0 29px; }
.cmd { gap: 8px; }
.cmd .chev { margin-left: 6px; }
.cmdbox input { width: 532px; height: 44px; padding: 0 17px 4px; background: #0f0f0f; border: 2px solid #353535; border-radius: 8px; font: 23px/30px "DejaVu Sans Mono", monospace; }
.fill { flex: 1; border-right: 4px solid #1a1a1a; }
.uns { padding: 0 16px 0 22px; border-right-width: 2px; }
.rev { gap: 10px; padding: 0 22px 0 18px; }
.grip { position: absolute; right: 6px; bottom: 16px; width: 12px; height: 12px; background: #606060; clip-path: polygon(100% 0, 100% 100%, 0 100%); }

.taskbar { display: flex; height: 13px; flex: none; overflow: hidden; color: #151515; background: linear-gradient(90deg, #dcdaf0, #ececf0 12%, #f4f0ee 30%, #f3d8d8 40%, #ecebf0 52%, #dcdaf0 64%, #dcdaee); font-size: 24px; line-height: 28px; }
.wx { width: 30px; height: 20px; margin: 6px 28px 0 40px; }
.temp, .taskbar time { margin-top: 3px; }
.apps { width: 1370px; height: 13px; }
.push { flex: 1084 0 0; }
.push.wide { flex: 1050 0 0; }
.taskbar time { margin-right: 86px; }
</style>
